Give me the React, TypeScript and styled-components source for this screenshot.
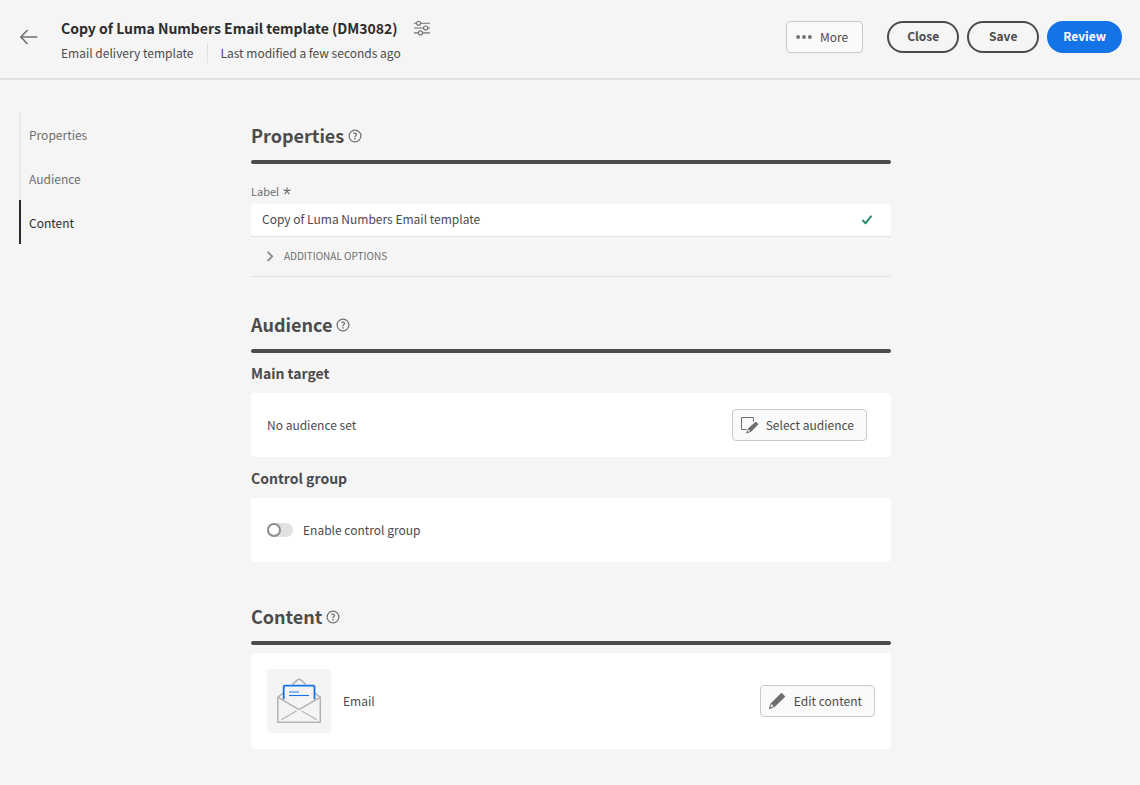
import React, { useState } from 'react';
import styled, { createGlobalStyle } from 'styled-components';

const GlobalStyle = createGlobalStyle`
  *, *::before, *::after { box-sizing: border-box; }
  body {
    margin: 0;
    background: #f5f5f5;
    color: #4b4b4b;
    font-family: 'Noto Sans CJK SC', 'Noto Sans', sans-serif;
    font-size: 12px;
    line-height: 20px;
  }
  button, input { font: inherit; color: inherit; }
  svg { display: block; flex: none; }
  h1, h2, h3, p { margin: 0; }
`;

const Header = styled.header`
  display: flex;
  align-items: center;
  min-height: 80px;
  padding: 0 18px 4px 20px;
  border-bottom: 2px solid #e1e1e1;
`;

const IconButton = styled.button`
  padding: 0;
  border: 0;
  background: none;
  color: #6e6e6e;
  cursor: pointer;
`;

const TitleBlock = styled.div`
  flex: 1;
  min-width: 0;
  margin-left: 23px;
  padding-top: 4px;
`;

const TitleRow = styled.div`
  display: flex;
  align-items: center;
  gap: 16px;
  height: 26px;
  margin-bottom: 2px;
`;

const Title = styled.h1`
  color: #2c2c2c;
  font-size: 14px;
  font-weight: 700;
  line-height: 24px;
`;

const MetaRow = styled.div`
  display: flex;
  height: 20px;
`;

const Meta = styled.span`
  & + & {
    margin-left: 14px;
    padding-left: 12px;
    border-left: 1px solid #e1e1e1;
  }
`;

const Actions = styled.div`
  display: flex;
  gap: 8px;
`;

const ToolButton = styled.button`
  display: flex;
  align-items: center;
  gap: 7px;
  height: 32px;
  padding: 0 12px 0 8px;
  border: 1px solid #c9c9c9;
  border-radius: 4px;
  background: #fafafa;
  white-space: nowrap;
  cursor: pointer;

  svg { color: #6e6e6e; }
`;

const MoreButton = styled(ToolButton)`
  margin-right: 16px;
  padding-right: 14px;
`;

const PillButton = styled.button<{ $primary?: boolean }>`
  height: 32px;
  min-width: 72px;
  padding: 0 14px 2px;
  border: 2px solid ${({ $primary }) => ($primary ? '#1473e6' : '#4b4b4b')};
  border-radius: 16px;
  background: ${({ $primary }) => ($primary ? '#1473e6' : 'transparent')};
  color: ${({ $primary }) => ($primary ? '#ffffff' : '#4b4b4b')};
  font-weight: 700;
  cursor: pointer;
`;

const Page = styled.div`
  display: grid;
  grid-template-columns: minmax(120px, 1fr) minmax(0, 640px) 1fr;
  padding: 32px 17px 36px 19px;
`;

const SideNav = styled.nav`
  display: flex;
  flex-direction: column;
  align-self: start;
`;

const NavLink = styled.a<{ $current?: boolean }>`
  padding: 13px 8px 11px;
  border-left: 2px solid ${({ $current }) => ($current ? '#2c2c2c' : '#eaeaea')};
  color: ${({ $current }) => ($current ? '#2c2c2c' : '#6e6e6e')};
  text-decoration: none;
`;

const Main = styled.main`
  padding-top: 12px;
`;

const Section = styled.section<{ $after?: number }>`
  margin-bottom: ${({ $after = 0 }) => $after}px;
`;

const SectionHeader = styled.div`
  display: flex;
  align-items: center;
  gap: 4px;
  height: 24px;
  margin-bottom: 12px;
  color: #6e6e6e;
`;

const SectionTitle = styled.h2`
  padding-bottom: 2px;
  color: #4b4b4b;
  font-size: 18px;
  font-weight: 700;
  line-height: 24px;
`;

const Rule = styled.div`
  height: 4px;
  border-radius: 2px;
  background: #4b4b4b;
`;

const SubTitle = styled.h3`
  margin: 8px 0;
  font-size: 14px;
  font-weight: 700;
  line-height: 24px;
`;

const FieldLabel = styled.label`
  display: flex;
  align-items: center;
  gap: 4px;
  height: 16px;
  margin: 19px 0 5px;
  color: #6e6e6e;
  font-size: 11px;
`;

const Field = styled.div`
  border-bottom: 1px solid #e1e1e1;
`;

const FieldBody = styled.div`
  display: flex;
  align-items: center;
  height: 32px;
  padding: 0 18px 0 11px;
  border-radius: 4px;
  background: #ffffff;
`;

const TextInput = styled.input`
  flex: 1;
  min-width: 0;
  height: 32px;
  padding: 0 0 4px;
  border: 0;
  outline: 0;
  background: transparent;
`;

const OptionsToggle = styled.button`
  display: flex;
  align-items: center;
  gap: 8px;
  width: 100%;
  height: 40px;
  padding: 0 0 1px 13px;
  border: 0;
  border-bottom: 1px solid #e1e1e1;
  background: none;
  color: #6e6e6e;
  font-size: 10px;
  text-transform: uppercase;
  cursor: pointer;
`;

const Card = styled.div<{ $end?: number; $top?: number }>`
  display: flex;
  align-items: center;
  min-height: 64px;
  margin: ${({ $top = 0 }) => $top}px 0 9px;
  padding: 16px ${({ $end = 16 }) => $end}px 16px 16px;
  border-radius: 4px;
  background: #ffffff;

  &:last-child { margin-bottom: 0; }
`;

const CardText = styled.p`
  flex: 1;
`;

const Thumb = styled.div`
  width: 64px;
  height: 64px;
  margin-right: 12px;
  border-radius: 4px;
  background: #f4f4f4;
`;

const SwitchLabel = styled.label`
  display: flex;
  align-items: center;
  gap: 10px;
  cursor: pointer;
`;

const Switch = styled.input`
  appearance: none;
  width: 26px;
  height: 14px;
  margin: 0;
  border-radius: 7px;
  background: #e1e1e1;
  cursor: pointer;

  &::before {
    content: '';
    display: block;
    width: 14px;
    height: 14px;
    border: 2px solid #8e8e8e;
    border-radius: 50%;
    background: #ffffff;
  }
  &:checked { background: #4b4b4b; }
  &:checked::before { margin-left: 12px; border-color: #4b4b4b; }
`;

const HelpIcon = () => (
  <svg width="14" height="14" viewBox="0 0 14 14" fill="none" stroke="currentColor" role="img" aria-label="Help">
    <circle cx="7" cy="7" r="5.9" strokeWidth="1.2" />
    <path d="M5.3 4.5C6.4 3.8 8.5 3.9 8.5 5.4C8.5 6.6 6.9 6.7 6.9 8.2" strokeWidth="1.3" />
    <circle cx="6.9" cy="9.9" r=".8" fill="currentColor" stroke="none" />
  </svg>
);

const ArrowIcon = () => (
  <svg width="18" height="18" viewBox="0 0 18 18" fill="none" stroke="currentColor" strokeWidth="1.5">
    <path d="M17.2 9H1.3M7.6 2.1L.9 9L7.6 15.9" />
  </svg>
);

const SlidersIcon = () => (
  <svg width="16" height="16" viewBox="0 0 16 16" fill="none" stroke="currentColor" strokeWidth="1.1">
    <path d="M0 3.3H2.5M6.7 3.3H16M0 8H9.5M13.7 8H16M0 12.9H4.3M8.5 12.9H16" />
    <circle cx="4.6" cy="3.3" r="2" />
    <circle cx="11.6" cy="8" r="2" />
    <circle cx="6.4" cy="12.9" r="2" />
  </svg>
);

const DotsIcon = () => (
  <svg width="18" height="18" viewBox="0 0 18 18" fill="currentColor">
    <circle cx="3.1" cy="9" r="1.9" />
    <circle cx="9" cy="9" r="1.9" />
    <circle cx="14.9" cy="9" r="1.9" />
  </svg>
);

const AsteriskIcon = () => (
  <svg width="8" height="8" viewBox="0 0 8 8" fill="none" stroke="currentColor" strokeWidth="1.2">
    <path d="M4 4V.4M4 4L7.5 2.9M4 4L6.2 7.1M4 4L1.8 7.1M4 4L.5 2.9" />
  </svg>
);

const CheckIcon = () => (
  <svg width="12" height="12" viewBox="0 0 12 12" fill="none" stroke="#268e6c" strokeWidth="2" strokeLinecap="round" strokeLinejoin="round">
    <path d="M2 6.5L4.5 9.3L10 2.3" />
  </svg>
);

const ChevronIcon = () => (
  <svg width="12" height="12" viewBox="0 0 12 12" fill="none" stroke="#8e8e8e" strokeWidth="2" strokeLinecap="round" strokeLinejoin="round">
    <path d="M4.2 2.4L8.2 6.4L4.2 10.4" />
  </svg>
);

const SelectIcon = () => (
  <svg width="18" height="18" viewBox="0 0 18 18">
    <path d="M5.5 13.5H.5V1.5H12.5V5.5" fill="none" stroke="currentColor" strokeWidth="1" />
    <path fill="currentColor" d="M14.3 6.1a.7.7 0 0 1 1 0l1.7 1.7a.7.7 0 0 1 0 1l-6.9 6.9-4.5 1.7a.3.3 0 0 1-.4-.4l1.9-4.4z" />
    <path fill="#fafafa" d="M7.7 13.5l1.5 1.6-2.6 1-.2-.2z" />
  </svg>
);

const PencilIcon = () => (
  <svg width="18" height="18" viewBox="0 0 18 18">
    <path fill="currentColor" d="M11.9 1.3a.8.8 0 0 1 1.2 0l2.7 2.7a.8.8 0 0 1 0 1.2L5.6 15.1.6 16.9a.4.4 0 0 1-.6-.6l1.8-5.1z" />
    <path fill="#fafafa" d="M2.6 12l2.1 2.2-2.9 1.1-.3-.3z" />
  </svg>
);

const EmailIllustration = () => (
  <svg width="64" height="64" viewBox="0 0 64 64" fill="none" strokeLinejoin="round">
    <g stroke="#b3b3b3" strokeWidth="1.5">
      <path d="M25.5 15.4L30.2 11.1Q32.1 9.5 34 11.1L38.8 15.4" />
      <path d="M16.2 24.2L10.8 28.1V53.3H53.3V28.1L47.7 24.2" />
      <path d="M10.8 28.1L32 40.7L53.3 28.1" />
      <path d="M14.2 50.7L29.5 41.9M34.6 41.9L49.8 50.7" strokeWidth="1.1" />
    </g>
    <path d="M16.7 30.3V17.9Q16.7 16.6 18 16.6H46.2Q47.5 16.6 47.5 17.9V30.3" stroke="#1473e6" strokeWidth="1.8" />
    <path d="M22 23H32" stroke="#62a3ee" strokeWidth="1.5" />
    <path d="M22 26.5H42" stroke="#1473e6" strokeWidth="1.1" />
  </svg>
);

const SectionHead = ({ title }: { title: string }) => (
  <>
    <SectionHeader>
      <SectionTitle>{title}</SectionTitle>
      <HelpIcon />
    </SectionHeader>
    <Rule />
  </>
);

export default function App() {
  const [label, setLabel] = useState('Copy of Luma Numbers Email template');
  return (
    <>
      <GlobalStyle />
      <Header>
        <IconButton aria-label="Back"><ArrowIcon /></IconButton>
        <TitleBlock>
          <TitleRow>
            <Title>Copy of Luma Numbers Email template (DM3082)</Title>
            <IconButton aria-label="Settings"><SlidersIcon /></IconButton>
          </TitleRow>
          <MetaRow>
            <Meta>Email delivery template</Meta>
            <Meta>Last modified a few seconds ago</Meta>
          </MetaRow>
        </TitleBlock>
        <Actions>
          <MoreButton><DotsIcon />More</MoreButton>
          <PillButton>Close</PillButton>
          <PillButton>Save</PillButton>
          <PillButton $primary>Review</PillButton>
        </Actions>
      </Header>
      <Page>
        <SideNav aria-label="Sections">
          <NavLink href="#properties">Properties</NavLink>
          <NavLink href="#audience">Audience</NavLink>
          <NavLink href="#content" $current aria-current="true">Content</NavLink>
        </SideNav>
        <Main>
          <Section id="properties" $after={36}>
            <SectionHead title="Properties" />
            <FieldLabel htmlFor="template-label">Label <AsteriskIcon /></FieldLabel>
            <Field>
              <FieldBody>
                <TextInput id="template-label" required value={label} onChange={(e) => setLabel(e.target.value)} />
                <CheckIcon />
              </FieldBody>
            </Field>
            <OptionsToggle aria-expanded="false"><ChevronIcon />Additional options</OptionsToggle>
          </Section>
          <Section id="audience" $after={43}>
            <SectionHead title="Audience" />
            <SubTitle>Main target</SubTitle>
            <Card $end={24}>
              <CardText>No audience set</CardText>
              <ToolButton><SelectIcon />Select audience</ToolButton>
            </Card>
            <SubTitle>Control group</SubTitle>
            <Card>
              <SwitchLabel>
                <Switch type="checkbox" role="switch" />
                Enable control group
              </SwitchLabel>
            </Card>
          </Section>
          <Section id="content">
            <SectionHead title="Content" />
            <Card $top={8}>
              <Thumb><EmailIllustration /></Thumb>
              <CardText>Email</CardText>
              <ToolButton><PencilIcon />Edit content</ToolButton>
            </Card>
          </Section>
        </Main>
      </Page>
    </>
  );
}
